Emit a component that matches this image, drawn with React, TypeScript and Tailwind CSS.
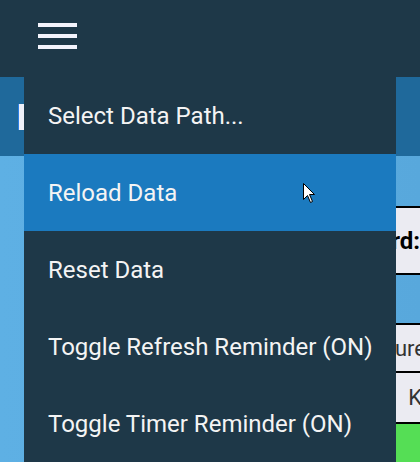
const menuItems = [
  { label: 'Select Data Path...', active: false },
  { label: 'Reload Data', active: true },
  { label: 'Reset Data', active: false },
  { label: 'Toggle Refresh Reminder (ON)', active: false },
  { label: 'Toggle Timer Reminder (ON)', active: false },
];

export default function App() {
  return (
    <div className="relative w-[420px] h-[462px] overflow-hidden font-['Roboto',sans-serif]">
      {/* app bar */}
      <header className="h-[77px] bg-[#1e3848] pt-[23px] pl-[38px]">
        <button className="flex flex-col gap-[7px] w-[39px]">
          <span className="block h-[4px] w-full bg-[#f3f3fc]" />
          <span className="block h-[4px] w-full bg-[#f3f3fc]" />
          <span className="block h-[4px] w-full bg-[#f3f3fc]" />
        </button>
      </header>

      {/* page behind the menu */}
      <div className="h-[79px] bg-[#1f699b] pt-[27px] pl-[18px]">
        <div className="h-[26px] w-[260px] bg-[#eef0f8] border-l border-[#2c7fe4]" />
      </div>
      <div className="h-[306px] bg-gradient-to-r from-[#5eb0e4] to-[#58a8dc] pt-[50px]">
        <div className="ml-[100px] w-[330px]">
          <div className="h-[69px] flex items-center justify-end pr-[10px] bg-[#ebebf2] border-y-2 border-black text-[24px] font-bold text-black">
            Leaderboard:
          </div>
          <div className="mt-[48px] border-t-2 border-black">
            <div className="h-[46px] flex items-center justify-end pr-[4px] bg-[#ebebf2] text-[22px] text-[#333]">
              Pressure
            </div>
            <div className="h-[53px] flex items-center justify-end pr-[8px] bg-[#ebebf2] border-y-2 border-black text-[22px] text-[#333]">
              K
            </div>
            <div className="h-[40px] bg-[#55de55]" />
          </div>
        </div>
      </div>

      {/* dropdown menu */}
      <nav className="absolute left-[24px] top-[77px] w-[372px] bg-[#1e3848]">
        {menuItems.map((item) => (
          <div
            key={item.label}
            className={`h-[77px] flex items-center pl-[24px] text-[24px] text-[#f4f4f4] ${
              item.active ? 'bg-[#1b7abf]' : ''
            }`}
          >
            {item.label}
          </div>
        ))}
      </nav>

      {/* mouse pointer */}
      <svg
        className="absolute left-[303px] top-[183px]"
        width="14"
        height="22"
        viewBox="0 0 14 22"
      >
        <path
          d="M0.5 0.5 L0.5 16.5 L4.5 12.5 L7.5 19.5 L9.5 18.5 L6.5 11.5 L11.5 11.5 Z"
          fill="#fff"
          stroke="#000"
          strokeWidth="1"
        />
      </svg>
    </div>
  );
}
